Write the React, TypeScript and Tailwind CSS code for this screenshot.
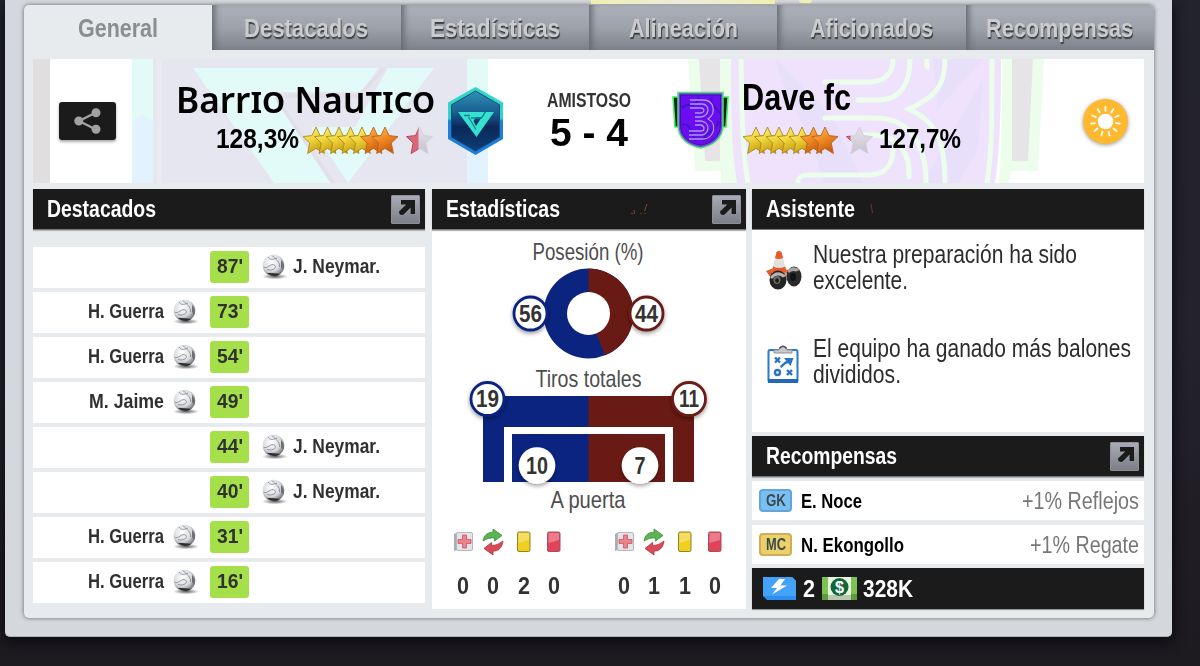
import { useLayoutEffect, useRef } from 'react';
import type { ReactNode } from 'react';

const TABS = [
  { label: 'General', width: 'w-[80px]' },
  { label: 'Destacados', width: 'w-[124px]' },
  { label: 'Estadísticas', width: 'w-[130px]' },
  { label: 'Alineación', width: 'w-[109px]' },
  { label: 'Aficionados', width: 'w-[123px]' },
  { label: 'Recompensas', width: 'w-[147px]' },
];

const GOALS = [
  { minute: "87'", name: 'J. Neymar.', home: false, width: 'w-[87px]' },
  { minute: "73'", name: 'H. Guerra', home: true, width: 'w-[76px]' },
  { minute: "54'", name: 'H. Guerra', home: true, width: 'w-[76px]' },
  { minute: "49'", name: 'M. Jaime', home: true, width: 'w-[75px]' },
  { minute: "44'", name: 'J. Neymar.', home: false, width: 'w-[87px]' },
  { minute: "40'", name: 'J. Neymar.', home: false, width: 'w-[87px]' },
  { minute: "31'", name: 'H. Guerra', home: true, width: 'w-[76px]' },
  { minute: "16'", name: 'H. Guerra', home: true, width: 'w-[76px]' },
];

const STAR = 'M14 1 L18 9.600 L27 10.600 L20.300 17 L22.400 27.500 L14 22.400 L5.600 27.500 L7.700 17 L1 10.600 L10 9.600 Z';

// Squeezes the text horizontally until it fills the width of its box.
function Fit({ className, children }: { className: string; children: ReactNode }) {
  const box = useRef<HTMLSpanElement>(null);
  const text = useRef<HTMLSpanElement>(null);

  useLayoutEffect(() => {
    if (!box.current || !text.current) return;
    text.current.style.transform = 'none';
    const natural = text.current.getBoundingClientRect().width;
    text.current.style.transform = `scaleX(${box.current.clientWidth / natural})`;
  });

  return (
    <span ref={box} className={`block shrink-0 ${className}`}>
      <span ref={text} className="inline-block origin-left whitespace-nowrap">
        {children}
      </span>
    </span>
  );
}

function OpenButton() {
  return (
    <span className="flex h-[29px] w-[29px] justify-end rounded-[1px] border border-[#8e9098] bg-linear-to-b from-[#a9acb6] to-[#7c7f87] pt-[3px] pr-[3px]">
      <svg width="18" height="17" viewBox="0 0 18 17">
        <path d="M3 1 H17 V15 H12.600 V8.600 L5.600 15.500 Q3.800 16.500 1.500 15 L1 12.500 L8.300 5.600 H3 Z" fill="#1b1b1b" />
      </svg>
    </span>
  );
}

function SectionHeader({ title, width, children, open = true }: { title: string; width: string; children?: ReactNode; open?: boolean }) {
  return (
    <div className="flex h-[41px] shrink-0 items-center border-b border-[#77797b] bg-[#1b1b1b] pr-[5px] pl-[14px] shadow-[0_1px_1px_#b5b8ba]">
      <Fit className={`text-[23.5px] leading-[40px] font-bold text-white ${width}`}>{title}</Fit>
      {children}
      {open && (
        <span className="ml-auto">
          <OpenButton />
        </span>
      )}
    </div>
  );
}

function Stars({ partial }: { partial: number }) {
  return (
    <svg width="133" height="31" viewBox="0 0 133 31" className="shrink-0">
      <defs>
        <linearGradient id="gold" x1="0" y1="0" x2="0.5" y2="1">
          <stop offset="0" stopColor="#fff4a0" />
          <stop offset="0.5" stopColor="#f1d83d" />
          <stop offset="1" stopColor="#c79a12" />
        </linearGradient>
        <linearGradient id="orange" x1="0" y1="0" x2="0.5" y2="1">
          <stop offset="0" stopColor="#ffc66a" />
          <stop offset="0.5" stopColor="#f28d25" />
          <stop offset="1" stopColor="#c95c0e" />
        </linearGradient>
        <linearGradient id="silver" x1="0" y1="0" x2="0" y2="1">
          <stop offset="0" stopColor="#e6e3ea" />
          <stop offset="1" stopColor="#c6c3cf" />
        </linearGradient>
        <clipPath id={`partial-${partial}`}>
          <rect x="0" y="0" width={partial} height="31" />
        </clipPath>
      </defs>
      {[0, 1, 2, 3, 4, 5, 6].map((i) => (
        <path
          key={i}
          transform={`translate(${i * 11.5} 1)`}
          d={STAR}
          fill={i < 5 ? 'url(#gold)' : 'url(#orange)'}
          stroke={i < 5 ? '#a98920' : '#b9631c'}
          strokeWidth="0.9"
          strokeLinejoin="round"
        />
      ))}
      <g transform="translate(103.5 1)">
        <path d={STAR} fill="url(#silver)" stroke="#d2d0da" strokeLinejoin="round" />
        <path d={STAR} fill="#d9687b" stroke="#c04a5c" strokeLinejoin="round" clipPath={`url(#partial-${partial})`} />
      </g>
    </svg>
  );
}

function HomeCrest() {
  return (
    <svg width="57" height="70" viewBox="0 0 57 70" className="shrink-0">
      <defs>
        <linearGradient id="hexRim" x1="0" y1="0" x2="0" y2="1">
          <stop offset="0.46" stopColor="#2fd6c8" />
          <stop offset="0.5" stopColor="#1d7fd8" />
        </linearGradient>
        <linearGradient id="hexFill" x1="0" y1="0" x2="0" y2="1">
          <stop offset="0" stopColor="#2f93b4" />
          <stop offset="0.35" stopColor="#1a5f93" />
          <stop offset="0.6" stopColor="#0a2858" />
          <stop offset="1" stopColor="#0d3f77" />
        </linearGradient>
      </defs>
      <path d="M28.5 1 L56 16.5 V53 L28.5 69 L1 53 V16.5 Z" fill="url(#hexRim)" />
      <path d="M28.5 5 L52.5 18.8 V51 L28.5 65 L4.5 51 V18.8 Z" fill="url(#hexFill)" stroke="#124a77" />
      <path d="M11 26 H37.500 L34.500 31 H29 L26.500 35 L29 40 L38 26 H47 L29.500 51 Z" fill="#34e3cf" />
      <path d="M17 29.500 H23 M21.500 31 L29 43.500 M38.500 26 L34.500 32 H24" fill="none" stroke="#1b7f9c" strokeWidth="1.3" />
    </svg>
  );
}

function AwayCrest() {
  return (
    <svg width="57" height="58" viewBox="0 0 57 58" className="shrink-0">
      <path d="M1 6 H8 V36 H3 Z M56 6 H49 V36 H54 Z" fill="#15221b" stroke="#3ff05a" strokeWidth="1.6" />
      <path d="M6 1.5 H51 V34 C51 48 40 55 28.5 57 C17 55 6 48 6 34 Z" fill="#7a3bf0" stroke="#49e873" strokeWidth="1.5" />
      <path d="M8.5 4 H48.5 V34 C48.5 46 39 52.5 28.5 54 C18 52.5 8.5 46 8.5 34 Z" fill="#6b0cf2" stroke="#37189b" />
      <path d="M10 17 C18 8 22 22 27 6 M31 50 C34 38 42 44 47 30 M40 6 C36 14 46 16 47 22 M10 34 C18 30 18 42 24 50" fill="none" stroke="#4313c4" strokeWidth="2" />
      <g fill="none" stroke="#a99be8" strokeWidth="1.3">
        <path d="M18 9 H31 C43 9 44 23 36 28 C46 33 42 48 31 48 H17" />
        <path d="M18 13 H30 C38 13 38 25 29 26 M29 30 C39 31 37 44 30 44 H17" />
        <path d="M18 17 H29 C33 17 33 22 28 22 H23 M23 34 H29 C33 35 33 40 29 40 H17" />
        <path d="M23 26 H29 M23 30 H29" />
      </g>
    </svg>
  );
}

// Pale enlarged crests that lie behind the match result.
function Watermark() {
  return (
    <svg width="1111" height="124" viewBox="0 0 1111 124" className="absolute inset-0">
      <rect x="0" y="0" width="17" height="124" fill="#e0dedf" />
      <rect x="99" y="0" width="356" height="124" fill="#e2fbf7" />
      <path d="M99 62 L109 56 L120 62 V124 H99 Z M434 60 L444 56 L455 62 V124 H434 Z" fill="#e2f3fd" />
      <rect x="120" y="0" width="314" height="124" fill="#e6e6f0" />
      <rect x="124" y="0" width="5" height="124" fill="#e9eaf2" />
      <path d="M160 9 H345 L330 33 H243 L301 124 H241 Z" fill="#e2fbf8" />
      <path d="M355 9 H401 L315 124 L278 68 H322 Z" fill="#e2fbf8" />
      <path d="M243 38 L300 124 M351 9 L326 37 H252" fill="none" stroke="#e3dfe9" strokeWidth="4" />

      <path d="M655 0 H718 V124 H688 V112 H662 Z" fill="#ecfdec" />
      <path d="M666 0 H687 V102 H672 Z" fill="#e6e4e6" />
      <path d="M698 0 H968 C968 60 966 100 962 124 H704 C698 90 698 40 698 0 Z" fill="#eee2fd" />
      <path d="M743 0 L800 60 L830 124 H790 C780 70 750 40 743 0 Z M900 0 L950 0 L905 50 Z M890 124 L950 20 L945 90 L925 124 Z" fill="#e8e0fb" />
      <path d="M708 0 C709 50 709 90 715 124 M959 0 C959 60 959 90 954 124" fill="none" stroke="#ecfdec" strokeWidth="5" />
      <g fill="none" stroke="#ecfdec" strokeWidth="5" strokeLinecap="round">
        <path d="M792 23 H835 C852 23 860 14 860 0" />
        <path d="M825 41 H845 C868 41 877 24 877 0" />
        <path d="M894 0 V8" />
        <path d="M912 0 C912 28 902 38 876 50 C902 62 912 80 912 124" />
        <path d="M792 59 H842 C870 59 893 76 893 124" />
        <path d="M825 76 H840 C862 76 878 92 876 118" />
        <path d="M765 124 C765 118 770 116 775 116 H835 C854 116 860 104 860 90" />
      </g>
      <path d="M969 0 H1011 L1005 112 H978 L976 124 H966 C969 90 969 40 969 0 Z" fill="#ecfdec" />
      <path d="M979 0 H1000 L995 102 H979 Z" fill="#e6e4e6" />
    </svg>
  );
}

function MatchHeader() {
  return (
    <div className="relative flex h-[124px] shrink-0 items-center overflow-hidden bg-white">
      <Watermark />
      <div className="relative ml-[26px] flex h-[38px] w-[57px] shrink-0 items-center justify-center rounded-[3px] bg-[#1b1b1b] shadow-[0_2px_3px_#aaa]">
        <svg width="28" height="28" viewBox="0 0 28 28" fill="#a2a2a2" stroke="#a2a2a2" strokeWidth="2.4">
          <path d="M22 5.5 L5 14 L22 22.5" fill="none" />
          <circle cx="22" cy="5.8" r="3.3" />
          <circle cx="4.8" cy="14" r="3.3" />
          <circle cx="22" cy="22.2" r="3.3" />
        </svg>
      </div>

      <div className="relative ml-[60px] flex w-[259px] shrink-0 flex-col items-end">
        <Fit className="-mt-[4px] mb-[2px] w-[259px] font-['Noto_Sans'] text-[36px] leading-[40px] font-semibold text-black">
          Barr<span className="[font-variant-caps:small-caps]">io</span> Nau
          <span className="[font-variant-caps:small-caps]">tico</span>
        </Fit>
        <div className="flex h-[36px] items-center gap-[3px]">
          <Fit className="-mt-[3px] w-[83px] text-[28px] leading-[36px] font-bold text-black">128,3%</Fit>
          <Stars partial={13} />
        </div>
      </div>
      <div className="relative ml-[12px]">
        <HomeCrest />
      </div>

      <div className="relative -mt-[2px] ml-[39px] flex w-[92px] shrink-0 flex-col items-center">
        <Fit className="w-[84px] text-[20.5px] leading-[24px] font-bold text-[#333]">AMISTOSO</Fit>
        <Fit className="w-[78px] text-[39px] leading-[41px] font-bold text-black">5 - 4</Fit>
      </div>

      <div className="relative -mt-[2px] ml-[37px]">
        <AwayCrest />
      </div>
      <div className="relative ml-[13px] shrink-0">
        <Fit className="-mt-[6px] mb-[4px] w-[109px] text-[36px] leading-[40px] font-bold text-black">Dave fc</Fit>
        <div className="flex h-[36px] items-center gap-[4px]">
          <Stars partial={5} />
          <Fit className="-mt-[3px] w-[82px] text-[28px] leading-[36px] font-bold text-black">127,7%</Fit>
        </div>
      </div>

      <div className="relative mr-[16px] ml-auto h-[45px] w-[45px] shrink-0 rounded-full bg-[#ffb92e] shadow-[0_1px_4px_#999]">
        <svg width="45" height="45" viewBox="0 0 45 45">
          <circle cx="22.5" cy="22.5" r="7.8" fill="#fff" />
          {[0, 1, 2, 3, 4, 5, 6, 7, 8, 9, 10].map((i) => (
            <path key={i} d="M22.5 8 V11.8" stroke="#fff" strokeWidth="1.8" strokeLinecap="round" transform={`rotate(${i * 32.73} 22.5 22.5)`} />
          ))}
        </svg>
      </div>
    </div>
  );
}

function Ball() {
  return (
    <svg width="30" height="28" viewBox="0 0 30 28" className="-mt-[2px] shrink-0">
      <defs>
        <radialGradient id="ball" cx="0.4" cy="0.35" r="0.65">
          <stop offset="0" stopColor="#ffffff" />
          <stop offset="0.65" stopColor="#d7d9de" />
          <stop offset="1" stopColor="#777a80" />
        </radialGradient>
        <radialGradient id="ballShadow">
          <stop offset="0" stopColor="#333" stopOpacity="0.8" />
          <stop offset="1" stopColor="#333" stopOpacity="0" />
        </radialGradient>
      </defs>
      <ellipse cx="16" cy="24.5" rx="13" ry="2.8" fill="url(#ballShadow)" />
      <circle cx="14.5" cy="13.5" r="10.8" fill="url(#ball)" />
      <path d="M8 21 C12 24.5 18 25 21 22 C17 21 12 21 8 21 Z" fill="#2e2e30" />
      <path d="M22 8 C25 11 25.5 15 24 18 L22 15 Z" fill="#6c6e74" />
      <path d="M4.500 15 C8 18 12 10 16 13.500 C18 17 12 19 8 17.500 M9 5 C11 8 13 8 18 6 M13 3.5 C17 8 21 9 20.500 15" fill="none" stroke="#94969c" strokeWidth="1" />
    </svg>
  );
}

function Highlights() {
  return (
    <section className="flex w-[392px] shrink-0 flex-col">
      <SectionHeader title="Destacados" width="w-[109px]" />
      <div className="flex flex-col gap-1 pt-[16.5px]">
        {GOALS.map((goal) => (
          <div key={goal.minute} className="flex h-[41px] items-center bg-white">
            <div className="flex w-[177px] shrink-0 items-center justify-end gap-[6px] pr-[10px]">
              {goal.home && (
                <>
                  <Fit className={`-mt-[2px] text-[20.5px] leading-[38px] font-bold text-[#303030] ${goal.width}`}>{goal.name}</Fit>
                  <Ball />
                </>
              )}
            </div>
            <div className="flex h-8 w-[39px] shrink-0 items-start justify-center rounded-[3px] bg-[#a5e04a]">
              <Fit className="w-[26px] text-[20.5px] leading-[30px] font-bold text-[#303030]">{goal.minute}</Fit>
            </div>
            {!goal.home && (
              <div className="ml-[10px] flex items-center gap-[4px]">
                <Ball />
                <Fit className={`-mt-[2px] text-[20.5px] leading-[38px] font-bold text-[#303030] ${goal.width}`}>{goal.name}</Fit>
              </div>
            )}
          </div>
        ))}
      </div>
    </section>
  );
}

function ChartBadge({ x, y, ring, value, width }: { x: number; y: number; ring?: string; value: string; width: number }) {
  return (
    <g>
      <circle cx={x} cy={y} r={ring ? 16.5 : 18.3} fill="#fff" stroke={ring} strokeWidth={ring ? 2.8 : 0} filter="url(#drop)" />
      <text x={x - width / 2} y={y + 8} textLength={width} lengthAdjust="spacingAndGlyphs" fontSize="23" fontWeight="700" fill="#333">
        {value}
      </text>
    </g>
  );
}

function ChartLabel({ x, y, width, children }: { x: number; y: number; width: number; children: string }) {
  return (
    <text x={x} y={y} textLength={width} lengthAdjust="spacingAndGlyphs" fontSize="24" fill="#4d4d4d">
      {children}
    </text>
  );
}

function StatChart() {
  return (
    <svg width="314" height="290" viewBox="0 0 314 290" className="shrink-0">
      <defs>
        <filter id="drop" x="-30%" y="-30%" width="160%" height="170%">
          <feDropShadow dx="0" dy="2" stdDeviation="2" floodColor="#000" floodOpacity="0.4" />
        </filter>
      </defs>
      <ChartLabel x={100.5} y={30} width={111}>Posesión (%)</ChartLabel>
      <circle cx="156.5" cy="83.5" r="45" fill="#0a2480" />
      <path d="M156.5 38.5 A45 45 0 0 1 173.07 125.34 L156.5 83.5 Z" fill="#6a1a14" />
      <circle cx="156.5" cy="83.5" r="21.5" fill="#fff" />
      <ChartBadge x={98.5} y={83.5} ring="#0a2480" value="56" width={23} />
      <ChartBadge x={214.5} y={83.5} ring="#6a1a14" value="44" width={23} />

      <ChartLabel x={103.5} y={157} width={106}>Tiros totales</ChartLabel>
      <path d="M51 166 H157 V197 H72 V252 H51 Z M80 204 H157 V252 H80 Z" fill="#0a2480" />
      <path d="M262 166 H156.5 V197 H241 V252 H262 Z M233 204 H156.5 V252 H233 Z" fill="#6a1a14" />
      <ChartBadge x={55.5} y={169} ring="#0a2480" value="19" width={23} />
      <ChartBadge x={257} y={169} ring="#6a1a14" value="11" width={20} />
      <ChartBadge x={105} y={235.5} value="10" width={22} />
      <ChartBadge x={208} y={235.5} value="7" width={11} />
      <ChartLabel x={118.5} y={278} width={75}>A puerta</ChartLabel>
    </svg>
  );
}

function InjuryIcon() {
  return (
    <svg width="22" height="22" viewBox="0 0 22 22">
      <path d="M2 3 L5 1.5 V19 L2 20 Z" fill="#a9adb5" />
      <rect x="4.5" y="1.5" width="16" height="18" rx="1.5" fill="#e2e4e8" stroke="#b4b7bd" />
      <path d="M10.5 4 H14.5 V8.5 H19 V12.5 H14.5 V17 H10.5 V12.5 H6 V8.5 H10.5 Z" fill="#e9848c" stroke="#d2525e" strokeWidth="0.8" />
    </svg>
  );
}

function SwapIcon() {
  return (
    <svg width="24" height="28" viewBox="0 0 24 28">
      <path d="M2 13 C3 6 8 4 12 4.500 V1 L21 7.500 L13.500 13 V10 C9 9.500 6 10.500 2 13 Z" fill="#5cb551" stroke="#3c8a39" strokeWidth="0.8" />
      <path d="M22 13 C21 21 16 23.500 12 23 V27 L3 20.500 L10.500 14.500 V17.500 C15 17.500 18 16 22 13 Z" fill="#dc4a58" stroke="#a8303e" strokeWidth="0.8" />
    </svg>
  );
}

function CardIcon({ red = false }: { red?: boolean }) {
  return (
    <svg width="16" height="22" viewBox="0 0 16 22">
      <rect x="1.5" y="1" width="12.5" height="19.500" rx="1.5" fill={red ? '#e2425a' : '#f0cf1f'} stroke={red ? '#a5505b' : '#8f8230'} />
      <path d="M2.500 2 H13 V9 L2.500 12 Z" fill="#fff" fillOpacity="0.3" />
    </svg>
  );
}

function Incidents({ values }: { values: string[] }) {
  return (
    <div className="grid w-[122px] grid-cols-4 justify-items-center">
      {[<InjuryIcon />, <SwapIcon />, <CardIcon />, <CardIcon red />].map((icon, i) => (
        <div key={i} className="flex flex-col items-center">
          <div className="flex h-[44px] items-center">{icon}</div>
          <Fit className="mt-[6px] w-[12px] text-[23px] leading-[32px] font-bold text-[#333]">{values[i]}</Fit>
        </div>
      ))}
    </div>
  );
}

function Statistics() {
  return (
    <section className="flex h-[420px] w-[314px] shrink-0 flex-col bg-white">
      <SectionHeader title="Estadísticas" width="w-[114px]">
        <svg width="22" height="16" viewBox="0 0 22 16" className="ml-[70px]">
          <path d="M1 12 L3 13 M4 9 L4.500 13 M11 12 V13 M17 3 L14.500 10 M15 12 V13" stroke="#8c4428" strokeWidth="1" />
        </svg>
      </SectionHeader>
      <StatChart />
      <div className="flex justify-between pr-[15px] pl-[16px]">
        <Incidents values={['0', '0', '2', '0']} />
        <Incidents values={['0', '1', '1', '0']} />
      </div>
    </section>
  );
}

function TrainingIcon() {
  return (
    <svg width="37" height="42" viewBox="0 0 37 42" className="shrink-0">
      <path d="M1 22 L9 19 L24 21 L22 28 L6 29 Z" fill="#e55a2b" />
      <path d="M11.500 3 Q14 1 16.500 3 L21.500 23 Q14 27 6.500 23 Z" fill="#e2e1de" />
      <path d="M11.500 3 Q14 1 16.500 3 L18 9 Q14 11 10 9 Z M8.200 17.500 Q14 20.500 20.300 17.500 L21.500 23 Q14 27 6.500 23 Z" fill="#ea5a29" />
      <path d="M14 26 L29 22 V28 L14 34 Z" fill="#b9bbbd" />
      <ellipse cx="29" cy="27.500" rx="7.500" ry="10" fill="#2b2b2b" />
      <path d="M22.500 22 Q28 15 35 21 L31 22.500 Q27 21 24 24 Z" fill="#a5a5a2" />
      <ellipse cx="28" cy="28" rx="3" ry="4" fill="#111" />
      <ellipse cx="13" cy="31" rx="8.500" ry="9.500" fill="#242424" />
      <path d="M5 28 Q12 19 21 27 L18 28.500 Q12 24 7 30 Z" fill="#b5b5b2" />
      <ellipse cx="12" cy="31" rx="3.500" ry="4" fill="#6b6b68" />
      <ellipse cx="12" cy="31.500" rx="1.800" ry="2.200" fill="#1b1b1b" />
    </svg>
  );
}

function TacticsIcon() {
  return (
    <svg width="33" height="40" viewBox="0 0 33 40" className="shrink-0">
      <rect x="1.500" y="6" width="29" height="32" rx="1.500" fill="#fdfdfd" stroke="#2a7bd0" strokeWidth="2" />
      <rect x="1" y="35" width="30" height="4" fill="#2568b8" />
      <path d="M7 9 V6 H12 Q12 2 16 2 Q20 2 20 6 H25 V9 Z" fill="#c6c8ca" stroke="#8d8f92" />
      <path d="M12.500 4.500 Q16 0 19.500 4.500" fill="none" stroke="#555" strokeWidth="1.500" />
      <g fill="none" stroke="#2a72c4" strokeWidth="2.400">
        <path d="M8 13.500 L13 18.500 M13 13.500 L8 18.500 M20 26 L25 31 M25 26 L20 31" />
        <circle cx="10.500" cy="28.500" r="2.500" />
        <path d="M13.500 23 C17 21 16 18.500 22 17.500" />
      </g>
      <path d="M17 14 L26.500 14 L23.500 22 Z" fill="#2a72c4" />
    </svg>
  );
}

function RewardRow({ tag, tagClass, name, nameWidth, gain, gainWidth }: { tag: string; tagClass: string; name: string; nameWidth: string; gain: string; gainWidth: string }) {
  return (
    <div className="flex h-[39px] shrink-0 items-center bg-white pr-[5px] pl-[7px]">
      <div className={`flex h-[23px] w-[33px] shrink-0 items-center justify-center rounded-[4px] border-2 ${tagClass}`}>
        <Fit className="w-[20px] text-[16px] leading-5 font-bold text-[#3c4a50]">{tag}</Fit>
      </div>
      <Fit className={`ml-[9px] text-[20.5px] leading-[38px] font-bold text-black ${nameWidth}`}>{name}</Fit>
      <Fit className={`ml-auto text-[23.5px] leading-[38px] text-[#777] ${gainWidth}`}>{gain}</Fit>
    </div>
  );
}

function Assistant() {
  return (
    <section className="flex w-[392px] shrink-0 flex-col">
      <SectionHeader title="Asistente" width="w-[89px]" open={false}>
        <svg width="4" height="12" viewBox="0 0 4 12" className="ml-[15px]">
          <path d="M1 1 L2.500 10" stroke="#7c3024" strokeWidth="1" />
        </svg>
      </SectionHeader>
      <div className="h-[202px] shrink-0 bg-white pl-[13px] text-[25.5px] leading-[26px] text-[#2c2c2c]">
        <div className="flex h-[94px] items-start gap-[11px] pt-[11px]">
          <div className="pt-[8px]">
            <TrainingIcon />
          </div>
          <div>
            <Fit className="w-[264px]">Nuestra preparación ha sido</Fit>
            <Fit className="w-[95px]">excelente.</Fit>
          </div>
        </div>
        <div className="flex items-start gap-[13px] pt-[11px] pl-[2px]">
          <div className="pt-[9px]">
            <TacticsIcon />
          </div>
          <div>
            <Fit className="w-[318px]">El equipo ha ganado más balones</Fit>
            <Fit className="w-[88px]">divididos.</Fit>
          </div>
        </div>
      </div>

      <div className="mt-1 flex flex-col">
        <SectionHeader title="Recompensas" width="w-[131px]" />
        <div className="mt-[4px] flex flex-col gap-[5px]">
          <RewardRow tag="GK" tagClass="border-[#62a5d6] bg-[#78c0f4]" name="E. Noce" nameWidth="w-[61px]" gain="+1% Reflejos" gainWidth="w-[117px]" />
          <RewardRow tag="MC" tagClass="border-[#d0ae58] bg-[#ecd069]" name="N. Ekongollo" nameWidth="w-[103px]" gain="+1% Regate" gainWidth="w-[109px]" />
        </div>
        <div className="mt-[4px] flex h-[41px] shrink-0 items-center bg-[#1b1b1b] pl-[10px] shadow-[0_1px_1px_#999]">
          <svg width="35" height="25" viewBox="0 0 35 25">
            <path d="M1 1 H30 L34 5 V24 H5 L1 20 Z" fill="#2e8df0" />
            <path d="M1 1 H30 L34 5 V20 H1 Z" fill="#45a2fa" />
            <path d="M17 3 L9 12 H15 L10 18.500 L25 9.500 H18.500 L23 3 Z" fill="#fff" />
          </svg>
          <Fit className="ml-[6px] w-[12px] text-[24px] leading-[41px] font-bold text-white">2</Fit>
          <svg width="37" height="25" viewBox="0 0 37 25" className="ml-[6px]">
            <rect x="1" y="1" width="35" height="23" fill="#7fc254" />
            <rect x="1" y="18" width="35" height="6" fill="#5d9c3c" />
            <rect x="7" y="1" width="23" height="23" fill="#e9f5df" />
            <rect x="7" y="19" width="23" height="5" fill="#b9c9ae" />
            <circle cx="18.500" cy="11" r="9" fill="#12673a" />
            <text x="14" y="17" textLength="9" lengthAdjust="spacingAndGlyphs" fontSize="17" fontWeight="700" fill="#fff">
              $
            </text>
          </svg>
          <Fit className="ml-[5px] w-[50px] text-[24px] leading-[41px] font-bold text-white">328K</Fit>
        </div>
      </div>
    </section>
  );
}

export default function App() {
  return (
    <main className="h-[666px] w-[1200px] overflow-hidden bg-linear-to-b from-[#23232c] via-[#24222b] to-[#1d1a20] pl-[5px] font-['Liberation_Sans',sans-serif]">
      <div className="h-[637px] w-[1167px] rounded-b-[5px] border-b border-[#aeb2b6] bg-[#d4d8dc] pl-[19px] shadow-[0_4px_14px_#08080c]">
        <div className="flex h-[5px] gap-[24px] pl-[567px]">
          <div className="h-[4px] w-[184px] bg-linear-to-r from-[#f0efb0] via-[#e9eadd] to-[#f0efb0]" />
          <div className="h-[3px] w-[13px] rounded-b-full bg-[#f0efb0]" />
        </div>
        <div className="flex h-[613px] w-[1130px] flex-col rounded-[5px] bg-[#e8ebed] shadow-[0_0_4px_#5f6468]">
          <nav className="grid h-[45px] shrink-0 grid-cols-6 overflow-hidden rounded-t-[5px]">
            {TABS.map((tab, i) => (
              <div
                key={tab.label}
                className={
                  i === 0
                    ? 'flex justify-center text-[#8b8d8f]'
                    : 'flex justify-center border-b border-[#6f7278] bg-linear-to-b from-[#adb1b9] via-[#9da1a9] to-[#7c8088] text-[#cbcccd] shadow-[inset_6px_0_6px_-3px_#666a72] [text-shadow:1px_2px_1px_#3f4146]'
                }
              >
                <Fit className={`text-[25.5px] leading-[46px] font-bold ${tab.width}`}>{tab.label}</Fit>
              </div>
            ))}
          </nav>
          <div className="flex flex-col pt-[9px] pr-[10px] pl-[9px]">
            <MatchHeader />
            <div className="mt-[6px] flex gap-[6.5px]">
              <Highlights />
              <Statistics />
              <Assistant />
            </div>
          </div>
        </div>
      </div>
    </main>
  );
}
